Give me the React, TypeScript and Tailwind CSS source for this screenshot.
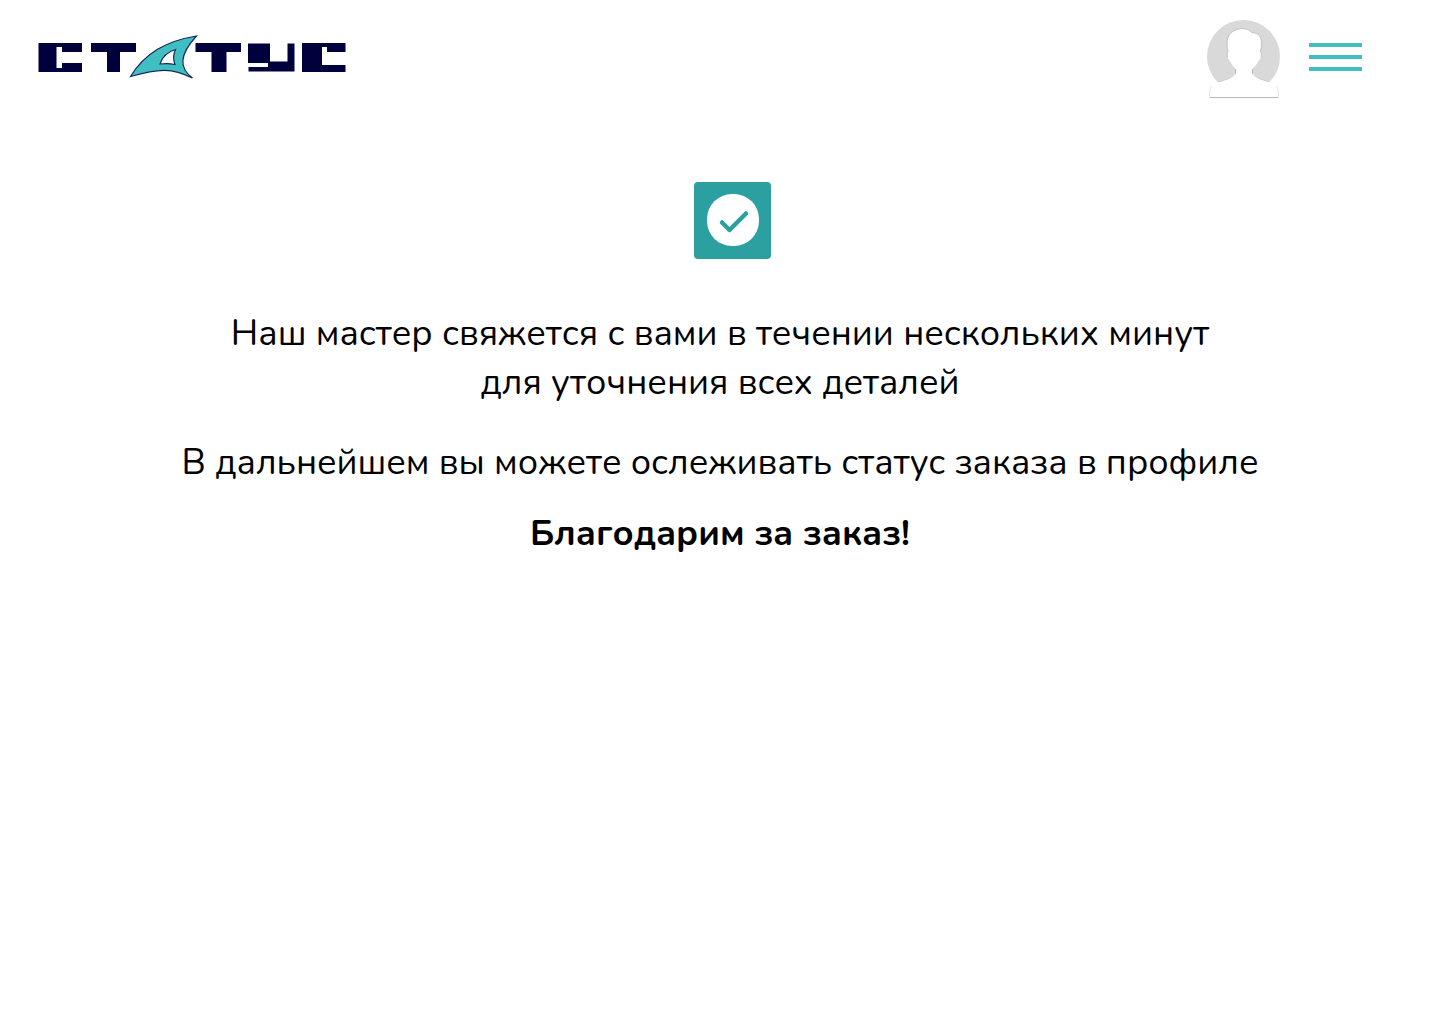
function Logo() {
  return (
    <svg viewBox="38 34 309 46" className="h-[46px] w-[309px]" role="img" aria-label="Статус">
      <g fill="#00003c">
        <path d="M38.500 43H82v9H62v-5h-5.500v21H62v-5h20v9H38.500z" />
        <path d="M91 43h45v9h-16v20h-13V52H91z" />
        <path d="M195.500 43H241v9h-14.500v20h-15V52h-16z" />
        <path d="M248 43.500h22v18h17.500v-18h7V71.500H248.500v-4.500H268v-4h-20z" />
        <path d="M302 43h43.500v9H327v-5h-5v18h23.500v7H302z" />
      </g>
      <path
        d="M130.500 76.500C145 53 166 41 196.500 36C179 55 179 68 192.500 78C172 68 160 68 130.500 76.500ZM160 64C162.500 56 167 52 175.500 49.500Q172 57 175 64.500Q168 63 160 64Z"
        fill="#40bfc3"
        fillRule="evenodd"
        stroke="#14285a"
        strokeWidth="1.200"
      />
    </svg>
  );
}

function Avatar() {
  return (
    <svg viewBox="1207 20 73 79" className="h-[79px] w-[73px]" aria-hidden="true">
      <circle cx="1243.500" cy="56.500" r="36.500" fill="#d9d9d9" />
      <path
        d="M1209.500 97.500V92Q1210 84 1219 82C1229 79 1236 77 1235.500 69Q1230.500 63 1229.500 60Q1227 59 1227 53L1228 51Q1227 48 1227 43C1227 34 1234 28.500 1243 28.500Q1249 28.500 1252 32.500C1259 33 1261.500 37 1261.500 43Q1261.500 48 1260.500 51L1261.500 53Q1261 59 1259 60Q1258 63 1252.500 69C1252 77 1259 79 1269 82Q1278 84 1278.500 92V97.500Z"
        fill="#fff"
      />
      <g fill="none" stroke="#b8b8b8">
        <path
          d="M1227.500 57Q1226.500 54 1228 51Q1227 48 1227 43C1227 34 1234 28.500 1243 28.500Q1249 28.500 1252 32.500C1259 33 1261.500 37 1261.500 43Q1261.500 48 1260.500 51Q1262 54 1261 57"
          strokeWidth="0.800"
        />
        <path d="M1235.500 69V74M1252.500 69V74M1209.500 97.500H1278.500" />
        <path d="M1235.500 74Q1233 77 1228 79L1219 82M1252.500 74Q1255 77 1260 79L1269 82" strokeWidth="0.500" />
        <path d="M1209.500 97V92Q1210 88 1211.500 86.500M1278.500 97V92Q1278 88 1276.500 86.500" stroke="#e4e4e4" />
      </g>
    </svg>
  );
}

function CheckBadge() {
  return (
    <svg viewBox="0 0 77 77" className="size-[77px]" aria-hidden="true">
      <rect width="77" height="77" rx="4" fill="#2ca0a1" />
      <rect x="13" y="12" width="52" height="52" rx="25" fill="#fff" />
      <path d="M28 40.500L35.500 48L52 31.500" fill="none" stroke="#2ca0a1" strokeWidth="4.500" strokeLinecap="round" strokeLinejoin="round" />
    </svg>
  );
}

export default function App() {
  return (
    <div className="min-h-screen bg-white font-['Nunito','Open_Sans',sans-serif] text-black">
      <header className="flex items-start justify-between pt-5 pr-[78px] pl-[38px]">
        <a href="#" className="mt-[14px] block">
          <Logo />
        </a>
        <div className="flex items-start gap-[29px]">
          <a href="#" aria-label="Профиль" className="block">
            <Avatar />
          </a>
          <button type="button" aria-label="Меню" className="mt-[23px] flex w-[53px] cursor-pointer flex-col gap-2">
            <span className="h-1 w-full bg-[#40bfc3]" />
            <span className="h-1 w-full bg-[#40bfc3]" />
            <span className="h-1 w-full bg-[#40bfc3]" />
          </button>
        </div>
      </header>
      <main className="flex flex-col items-center pt-[83px] text-center text-[36px] leading-[49px]">
        <div className="pl-[25px]">
          <CheckBadge />
        </div>
        <p className="mt-[50px]">
          Наш мастер свяжется с вами в течении нескольких минут
          <br />
          для уточнения всех деталей
        </p>
        <p className="mt-[31px]">В дальнейшем вы можете ослеживать статус заказа в профиле</p>
        <p className="mt-[22px] font-bold">Благодарим за заказ!</p>
      </main>
    </div>
  );
}
